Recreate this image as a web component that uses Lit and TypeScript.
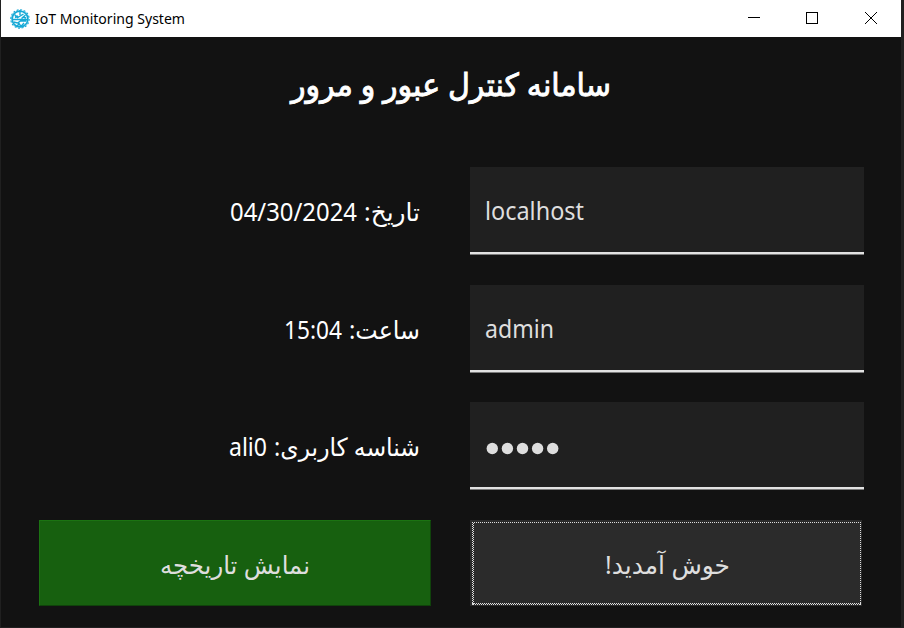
import { LitElement, html, css, svg } from "lit";
import { customElement, property } from "lit/decorators.js";

/** A single line of text, fitted to a given width. */
@customElement("fit-text")
class FitText extends LitElement {
  @property({ type: Number }) width = 100;
  @property({ type: Number }) size = 24;
  @property({ type: Number }) heavy = 0;
  @property() dir = "ltr";
  @property() text = "";
  static styles = css`
    :host { display: block; flex: none; }
    svg { display: block; overflow: visible; }
    text { fill: currentColor; stroke: currentColor; font-family: "Noto Sans", "DejaVu Sans", sans-serif; }
  `;
  render() {
    const rtl = this.dir === "rtl";
    return html`<svg width=${this.width} height="40">
      <text x=${rtl ? this.width : 0} y="28" direction=${this.dir} font-size=${this.size}
        stroke-width=${this.heavy} textLength=${this.width} lengthAdjust="spacingAndGlyphs">${this.text}</text>
    </svg>`;
  }
}

@customElement("app-root")
class AppRoot extends LitElement {
  static styles = css`
    :host { display: block; width: 904px; height: 628px; background: #202020; overflow: hidden; }
    * { box-sizing: border-box; }
    .window { width: 901px; height: 627px; background: #121212; border-left: 1px solid #202020; }
    .bar { height: 37px; background: #fff; color: #000; display: flex; align-items: center; padding-left: 9px; }
    .bar .name { margin: -5px auto 0 5px; }
    .controls { display: flex; width: 176px; height: 37px; }
    .title { display: flex; justify-content: center; color: #fff; height: 130px; padding-top: 31px; }
    .grid { display: grid; grid-template-columns: 392px 394px; column-gap: 39px; row-gap: 30px;
      grid-template-rows: 88px 87px 88px 86px; padding-left: 38px; color: #fff; }
    .label { display: flex; justify-content: flex-end; gap: 7px; padding: 26px 11px 0 0; }
    .field { background: #202020; color: #dedede; padding: 25px 0 0 15px; position: relative; }
    .field.tall { margin-bottom: -1px; }
    .field::after { content: ""; position: absolute; left: 0; right: 0; bottom: 0; height: 3px;
      background: linear-gradient(#e2e2e2 0 2px, #7b7b7b 2px); }
    .dots { display: block; }
    .btn { display: flex; justify-content: center; padding-top: 26px; color: #dedede; height: 86px; }
    .green { background: #17600f; border: 1px solid; border-color: #1b7312 #10430b #10430b #1b7312; padding-top: 25px; }
    .gray { background: #2b2b2b; width: 392px; padding-left: 2px; position: relative; }
    .focus { position: absolute; left: 0; top: 0; }
  `;
  render() {
    return html`<div class="window">
      <div class="bar">
        <svg width="20" height="20" viewBox="0 0 20 20" fill="none" stroke="#16a9d6">
          <circle cx="10" cy="10" r="7.9" stroke-width="1.7"/>
          <circle cx="10" cy="10" r="9.2" stroke-width="1.1" stroke-dasharray="2 1.6"/>
          <path d="M10 1v5M4.5 5.5l3 3 6-3.5M15.5 6l-4 3.5M3 10.5h14M3.5 13l4 1 3-2h6M7 17.5l2-3 2 3 3-3.500M5 8.500l3-1.500M13 8l3 1" stroke-width="1.4"/>
        </svg>
        <fit-text class="name" .width=${150} .size=${15} text="IoT Monitoring System"></fit-text>
        <svg class="controls" width="176" height="37" fill="none" stroke="#000" shape-rendering="crispEdges">
          <path d="M23 17.5h12"/><rect x="81.5" y="12.5" width="11" height="11"/>
          <path d="M140 12l12 12M152 12l-12 12" shape-rendering="auto"/>
        </svg>
      </div>
      <div class="title"><fit-text .width=${320} .size=${31.5} .heavy=${0.9} dir="rtl" text="سامانه کنترل عبور و مرور"></fit-text></div>
      <div class="grid">
        <div class="label"><fit-text .width=${127} .size=${25} text="04/30/2024"></fit-text><fit-text .width=${56} .size=${25} dir="rtl" text="تاریخ:"></fit-text></div>
        <div class="field"><fit-text .width=${99} .size=${24.5} text="localhost"></fit-text></div>
        <div class="label"><fit-text .width=${58} .size=${25} text="15:04"></fit-text><fit-text .width=${71} .size=${25} dir="rtl" text="ساعت:"></fit-text></div>
        <div class="field tall"><fit-text .width=${69} .size=${24.5} text="admin"></fit-text></div>
        <div class="label"><fit-text .width=${38} .size=${25} text="ali0"></fit-text><fit-text .width=${146} .size=${25} dir="rtl" text="شناسه کاربری:"></fit-text></div>
        <div class="field"><svg class="dots" width="90" height="40" fill="#dedede">
          ${[0, 1, 2, 3, 4].map(i => svg`<circle cx=${7.3 + i * 15.1} cy="21.5" r="5.7"/>`)}</svg></div>
        <div class="btn green"><fit-text .width=${150} .size=${25} dir="rtl" text="نمایش تاریخچه"></fit-text></div>
        <div class="btn gray"><fit-text .width=${125} .size=${25} dir="rtl" text="خوش آمدید!"></fit-text>
          <svg class="focus" width="392" height="86" shape-rendering="crispEdges" stroke="#dedede" fill="none" stroke-dasharray="1 1">
            <path d="M2 2.5H391M2.5 2V85M3.5 3V85M390.5 2V85M2 83.5H391M3 84.5H391"/>
          </svg></div>
      </div>
    </div>`;
  }
}
